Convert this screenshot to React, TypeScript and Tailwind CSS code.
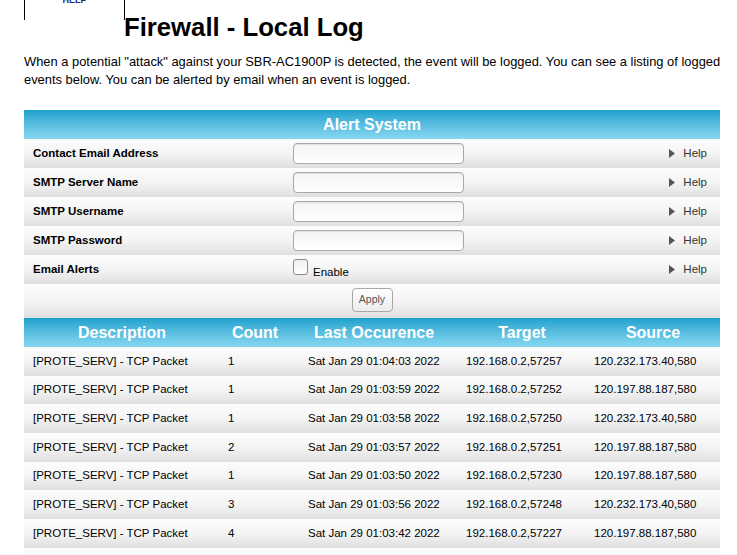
import React from 'react'

const FIELDS = ['Contact Email Address', 'SMTP Server Name', 'SMTP Username', 'SMTP Password']

const LOGS = [
  { count: '1', time: 'Sat Jan 29 01:04:03 2022', target: '192.168.0.2,57257', source: '120.232.173.40,580' },
  { count: '1', time: 'Sat Jan 29 01:03:59 2022', target: '192.168.0.2,57252', source: '120.197.88.187,580' },
  { count: '1', time: 'Sat Jan 29 01:03:58 2022', target: '192.168.0.2,57250', source: '120.232.173.40,580' },
  { count: '2', time: 'Sat Jan 29 01:03:57 2022', target: '192.168.0.2,57251', source: '120.197.88.187,580' },
  { count: '1', time: 'Sat Jan 29 01:03:50 2022', target: '192.168.0.2,57230', source: '120.197.88.187,580' },
  { count: '3', time: 'Sat Jan 29 01:03:56 2022', target: '192.168.0.2,57248', source: '120.232.173.40,580' },
  { count: '4', time: 'Sat Jan 29 01:03:42 2022', target: '192.168.0.2,57227', source: '120.197.88.187,580' },
]

const rowBg = 'bg-gradient-to-b from-[#fdfdfd] via-[#f4f4f4] to-[#dfdfdf]'
const headBg = 'bg-gradient-to-b from-[#17a2ce] to-[#86d8f1]'

function HelpLink() {
  return (
    <div className="flex items-center gap-[8px] pr-[13px] text-[11.5px] text-[#333]">
      <svg width="6" height="9" viewBox="0 0 6 9">
        <path d="M0 0 L6 4.5 L0 9 Z" fill="#555" />
      </svg>
      <span>Help</span>
    </div>
  )
}

export default function App() {
  return (
    <div className="bg-white min-h-[555px] pl-[24px] font-['Liberation_Sans',Arial,sans-serif] text-black">
      <div className="flex">
        <div className="w-[101px] h-[20px] border-x border-black overflow-hidden text-center">
          <div className="-mt-[5px] text-[9px] leading-[10px] font-bold text-[#1b2a6b]">HELP</div>
        </div>
        <h1 className="-ml-px mt-[12px] text-[25.7px] leading-[30px] font-bold">Firewall - Local Log</h1>
      </div>

      <p className="mt-[11px] w-[712px] text-[12.9px] leading-[18px]">
        When a potential "attack" against your SBR-AC1900P is detected, the event will be logged. You can see a listing of logged events below. You can be alerted by email when an event is logged.
      </p>

      <div className="mt-[21px] w-[696px]">
        <div className={`h-[29px] flex items-center justify-center ${headBg} text-white text-[16px] font-bold`}>
          Alert System
        </div>

        {FIELDS.map(f => (
          <div key={f} className={`h-[29px] flex items-center ${rowBg}`}>
            <div className="w-[269px] pl-[9px] text-[11.5px] font-bold">{f}</div>
            <div className="w-[171px] h-[21px] rounded-[4px] border border-[#a9a9a9] bg-gradient-to-b from-[#f4f4f4] to-white shadow-[inset_0_1px_1px_rgba(0,0,0,0.08)]" />
            <div className="flex-1" />
            <HelpLink />
          </div>
        ))}

        <div className={`h-[29px] flex items-center ${rowBg}`}>
          <div className="w-[269px] pl-[9px] text-[11.5px] font-bold">Email Alerts</div>
          <div className="flex items-end gap-[5px] -mt-[5px]">
            <div className="w-[15px] h-[16px] rounded-[3px] border border-[#8a8a8a] bg-gradient-to-b from-[#f0f0f0] to-white" />
            <span className="text-[11.5px] leading-[12px] translate-y-[3px]">Enable</span>
          </div>
          <div className="flex-1" />
          <HelpLink />
        </div>

        <div className={`h-[34px] flex items-center justify-center ${rowBg}`}>
          <button className="w-[41px] h-[24px] rounded-[4px] border border-[#a8a8a8] bg-gradient-to-b from-white to-[#ececec] text-[10.5px] text-[#555] -mt-[2px]">
            Apply
          </button>
        </div>

        <div className={`h-[29px] flex items-center ${headBg} text-white text-[16px] font-bold`}>
          <div className="w-[196px] text-center">Description</div>
          <div className="w-[70px] text-center">Count</div>
          <div className="w-[168px] text-center">Last Occurence</div>
          <div className="w-[128px] text-center">Target</div>
          <div className="w-[134px] text-center">Source</div>
        </div>

        {LOGS.map((r, i) => (
          <div key={i} className={`h-[28.67px] flex items-center text-[11.5px] ${rowBg}`}>
            <div className="w-[196px] pl-[9px]">[PROTE_SERV] - TCP Packet</div>
            <div className="w-[70px] pl-[8px]">{r.count}</div>
            <div className="w-[168px] pl-[18px]">{r.time}</div>
            <div className="w-[128px] pl-[8px]">{r.target}</div>
            <div className="w-[134px] pl-[8px]">{r.source}</div>
          </div>
        ))}
        <div className={`h-[28.67px] ${rowBg}`} />
      </div>
    </div>
  )
}
